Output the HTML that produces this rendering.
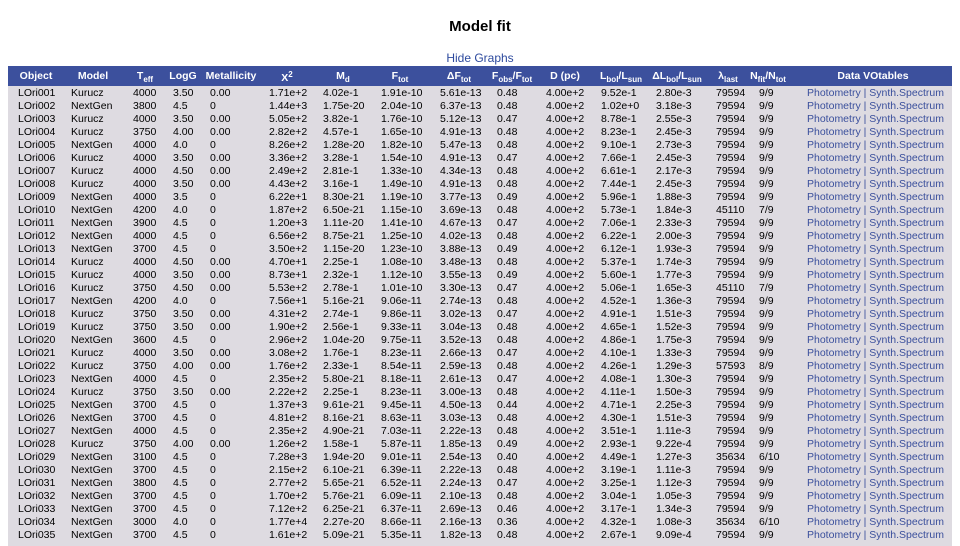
<!DOCTYPE html>
<html><head><meta charset="utf-8"><style>
body{margin:0;width:960px;height:544px;overflow:hidden;background:#fff;font-family:"Liberation Sans",Arial,sans-serif;color:#000}
h1{position:absolute;top:18px;left:0;width:960px;text-align:center;font-size:15px;margin:0;font-weight:bold}
.hg{position:absolute;top:51px;left:0;width:960px;text-align:center;font-size:12px;color:#2d4a9e}
.hd{position:absolute;top:66px;left:8px;width:944px;height:20px;background:#3c509d;color:#fff;font-weight:bold;font-size:10.5px}
.hd span{position:absolute;top:4px;transform:translateX(-50%);white-space:nowrap}
.hd sub{font-size:8px;vertical-align:-3px}
.hd sup{font-size:8px;vertical-align:4px}
.tb{position:absolute;top:86px;left:8px;width:944px;height:460px;background:#dedbe1;padding-top:1px;box-sizing:border-box}
.r{position:relative;height:13px;font-size:10.5px;line-height:13px;white-space:nowrap}
.r span{position:absolute;top:0}
.r span:nth-child(1){left:10px}.r span:nth-child(2){left:63px}.r span:nth-child(3){left:125px}.r span:nth-child(4){left:165px}.r span:nth-child(5){left:202px}.r span:nth-child(6){left:261px}.r span:nth-child(7){left:315px}.r span:nth-child(8){left:373px}.r span:nth-child(9){left:432px}.r span:nth-child(10){left:489px}.r span:nth-child(11){left:538px}.r span:nth-child(12){left:593px}.r span:nth-child(13){left:648px}.r span:nth-child(14){left:708px}.r span:nth-child(15){left:751px}.r span:nth-child(16){left:799px;color:#3a4f9c}
</style></head><body>
<h1>Model fit</h1>
<div class="hg">Hide Graphs</div>
<div class="hd">
<span style="left:28px">Object</span><span style="left:85px">Model</span><span style="left:137px">T<sub>eff</sub></span><span style="left:175px">LogG</span><span style="left:223px">Metallicity</span><span style="left:279px">X<sup>2</sup></span><span style="left:335px">M<sub>d</sub></span><span style="left:392px">F<sub>tot</sub></span><span style="left:451px">ΔF<sub>tot</sub></span><span style="left:504px">F<sub>obs</sub>/F<sub>tot</sub></span><span style="left:557px">D (pc)</span><span style="left:613px">L<sub>bol</sub>/L<sub>sun</sub></span><span style="left:669px">ΔL<sub>bol</sub>/L<sub>sun</sub></span><span style="left:720px">λ<sub>last</sub></span><span style="left:760px">N<sub>fit</sub>/N<sub>tot</sub></span><span style="left:865px">Data VOtables</span>
</div>
<div class="tb">
<div class="r"><span>LOri001</span><span>Kurucz</span><span>4000</span><span>3.50</span><span>0.00</span><span>1.71e+2</span><span>4.02e-1</span><span>1.91e-10</span><span>5.61e-13</span><span>0.48</span><span>4.00e+2</span><span>9.52e-1</span><span>2.80e-3</span><span>79594</span><span>9/9</span><span>Photometry | Synth.Spectrum</span></div>
<div class="r"><span>LOri002</span><span>NextGen</span><span>3800</span><span>4.5</span><span>0</span><span>1.44e+3</span><span>1.75e-20</span><span>2.04e-10</span><span>6.37e-13</span><span>0.48</span><span>4.00e+2</span><span>1.02e+0</span><span>3.18e-3</span><span>79594</span><span>9/9</span><span>Photometry | Synth.Spectrum</span></div>
<div class="r"><span>LOri003</span><span>Kurucz</span><span>4000</span><span>3.50</span><span>0.00</span><span>5.05e+2</span><span>3.82e-1</span><span>1.76e-10</span><span>5.12e-13</span><span>0.47</span><span>4.00e+2</span><span>8.78e-1</span><span>2.55e-3</span><span>79594</span><span>9/9</span><span>Photometry | Synth.Spectrum</span></div>
<div class="r"><span>LOri004</span><span>Kurucz</span><span>3750</span><span>4.00</span><span>0.00</span><span>2.82e+2</span><span>4.57e-1</span><span>1.65e-10</span><span>4.91e-13</span><span>0.48</span><span>4.00e+2</span><span>8.23e-1</span><span>2.45e-3</span><span>79594</span><span>9/9</span><span>Photometry | Synth.Spectrum</span></div>
<div class="r"><span>LOri005</span><span>NextGen</span><span>4000</span><span>4.0</span><span>0</span><span>8.26e+2</span><span>1.28e-20</span><span>1.82e-10</span><span>5.47e-13</span><span>0.48</span><span>4.00e+2</span><span>9.10e-1</span><span>2.73e-3</span><span>79594</span><span>9/9</span><span>Photometry | Synth.Spectrum</span></div>
<div class="r"><span>LOri006</span><span>Kurucz</span><span>4000</span><span>3.50</span><span>0.00</span><span>3.36e+2</span><span>3.28e-1</span><span>1.54e-10</span><span>4.91e-13</span><span>0.47</span><span>4.00e+2</span><span>7.66e-1</span><span>2.45e-3</span><span>79594</span><span>9/9</span><span>Photometry | Synth.Spectrum</span></div>
<div class="r"><span>LOri007</span><span>Kurucz</span><span>4000</span><span>4.50</span><span>0.00</span><span>2.49e+2</span><span>2.81e-1</span><span>1.33e-10</span><span>4.34e-13</span><span>0.48</span><span>4.00e+2</span><span>6.61e-1</span><span>2.17e-3</span><span>79594</span><span>9/9</span><span>Photometry | Synth.Spectrum</span></div>
<div class="r"><span>LOri008</span><span>Kurucz</span><span>4000</span><span>3.50</span><span>0.00</span><span>4.43e+2</span><span>3.16e-1</span><span>1.49e-10</span><span>4.91e-13</span><span>0.48</span><span>4.00e+2</span><span>7.44e-1</span><span>2.45e-3</span><span>79594</span><span>9/9</span><span>Photometry | Synth.Spectrum</span></div>
<div class="r"><span>LOri009</span><span>NextGen</span><span>4000</span><span>3.5</span><span>0</span><span>6.22e+1</span><span>8.30e-21</span><span>1.19e-10</span><span>3.77e-13</span><span>0.49</span><span>4.00e+2</span><span>5.96e-1</span><span>1.88e-3</span><span>79594</span><span>9/9</span><span>Photometry | Synth.Spectrum</span></div>
<div class="r"><span>LOri010</span><span>NextGen</span><span>4200</span><span>4.0</span><span>0</span><span>1.87e+2</span><span>6.50e-21</span><span>1.15e-10</span><span>3.69e-13</span><span>0.48</span><span>4.00e+2</span><span>5.73e-1</span><span>1.84e-3</span><span>45110</span><span>7/9</span><span>Photometry | Synth.Spectrum</span></div>
<div class="r"><span>LOri011</span><span>NextGen</span><span>3900</span><span>4.5</span><span>0</span><span>1.20e+3</span><span>1.11e-20</span><span>1.41e-10</span><span>4.67e-13</span><span>0.47</span><span>4.00e+2</span><span>7.06e-1</span><span>2.33e-3</span><span>79594</span><span>9/9</span><span>Photometry | Synth.Spectrum</span></div>
<div class="r"><span>LOri012</span><span>NextGen</span><span>4000</span><span>4.5</span><span>0</span><span>6.56e+2</span><span>8.75e-21</span><span>1.25e-10</span><span>4.02e-13</span><span>0.48</span><span>4.00e+2</span><span>6.22e-1</span><span>2.00e-3</span><span>79594</span><span>9/9</span><span>Photometry | Synth.Spectrum</span></div>
<div class="r"><span>LOri013</span><span>NextGen</span><span>3700</span><span>4.5</span><span>0</span><span>3.50e+2</span><span>1.15e-20</span><span>1.23e-10</span><span>3.88e-13</span><span>0.49</span><span>4.00e+2</span><span>6.12e-1</span><span>1.93e-3</span><span>79594</span><span>9/9</span><span>Photometry | Synth.Spectrum</span></div>
<div class="r"><span>LOri014</span><span>Kurucz</span><span>4000</span><span>4.50</span><span>0.00</span><span>4.70e+1</span><span>2.25e-1</span><span>1.08e-10</span><span>3.48e-13</span><span>0.48</span><span>4.00e+2</span><span>5.37e-1</span><span>1.74e-3</span><span>79594</span><span>9/9</span><span>Photometry | Synth.Spectrum</span></div>
<div class="r"><span>LOri015</span><span>Kurucz</span><span>4000</span><span>3.50</span><span>0.00</span><span>8.73e+1</span><span>2.32e-1</span><span>1.12e-10</span><span>3.55e-13</span><span>0.49</span><span>4.00e+2</span><span>5.60e-1</span><span>1.77e-3</span><span>79594</span><span>9/9</span><span>Photometry | Synth.Spectrum</span></div>
<div class="r"><span>LOri016</span><span>Kurucz</span><span>3750</span><span>4.50</span><span>0.00</span><span>5.53e+2</span><span>2.78e-1</span><span>1.01e-10</span><span>3.30e-13</span><span>0.47</span><span>4.00e+2</span><span>5.06e-1</span><span>1.65e-3</span><span>45110</span><span>7/9</span><span>Photometry | Synth.Spectrum</span></div>
<div class="r"><span>LOri017</span><span>NextGen</span><span>4200</span><span>4.0</span><span>0</span><span>7.56e+1</span><span>5.16e-21</span><span>9.06e-11</span><span>2.74e-13</span><span>0.48</span><span>4.00e+2</span><span>4.52e-1</span><span>1.36e-3</span><span>79594</span><span>9/9</span><span>Photometry | Synth.Spectrum</span></div>
<div class="r"><span>LOri018</span><span>Kurucz</span><span>3750</span><span>3.50</span><span>0.00</span><span>4.31e+2</span><span>2.74e-1</span><span>9.86e-11</span><span>3.02e-13</span><span>0.47</span><span>4.00e+2</span><span>4.91e-1</span><span>1.51e-3</span><span>79594</span><span>9/9</span><span>Photometry | Synth.Spectrum</span></div>
<div class="r"><span>LOri019</span><span>Kurucz</span><span>3750</span><span>3.50</span><span>0.00</span><span>1.90e+2</span><span>2.56e-1</span><span>9.33e-11</span><span>3.04e-13</span><span>0.48</span><span>4.00e+2</span><span>4.65e-1</span><span>1.52e-3</span><span>79594</span><span>9/9</span><span>Photometry | Synth.Spectrum</span></div>
<div class="r"><span>LOri020</span><span>NextGen</span><span>3600</span><span>4.5</span><span>0</span><span>2.96e+2</span><span>1.04e-20</span><span>9.75e-11</span><span>3.52e-13</span><span>0.48</span><span>4.00e+2</span><span>4.86e-1</span><span>1.75e-3</span><span>79594</span><span>9/9</span><span>Photometry | Synth.Spectrum</span></div>
<div class="r"><span>LOri021</span><span>Kurucz</span><span>4000</span><span>3.50</span><span>0.00</span><span>3.08e+2</span><span>1.76e-1</span><span>8.23e-11</span><span>2.66e-13</span><span>0.47</span><span>4.00e+2</span><span>4.10e-1</span><span>1.33e-3</span><span>79594</span><span>9/9</span><span>Photometry | Synth.Spectrum</span></div>
<div class="r"><span>LOri022</span><span>Kurucz</span><span>3750</span><span>4.00</span><span>0.00</span><span>1.76e+2</span><span>2.33e-1</span><span>8.54e-11</span><span>2.59e-13</span><span>0.48</span><span>4.00e+2</span><span>4.26e-1</span><span>1.29e-3</span><span>57593</span><span>8/9</span><span>Photometry | Synth.Spectrum</span></div>
<div class="r"><span>LOri023</span><span>NextGen</span><span>4000</span><span>4.5</span><span>0</span><span>2.35e+2</span><span>5.80e-21</span><span>8.18e-11</span><span>2.61e-13</span><span>0.47</span><span>4.00e+2</span><span>4.08e-1</span><span>1.30e-3</span><span>79594</span><span>9/9</span><span>Photometry | Synth.Spectrum</span></div>
<div class="r"><span>LOri024</span><span>Kurucz</span><span>3750</span><span>3.50</span><span>0.00</span><span>2.22e+2</span><span>2.25e-1</span><span>8.23e-11</span><span>3.00e-13</span><span>0.48</span><span>4.00e+2</span><span>4.11e-1</span><span>1.50e-3</span><span>79594</span><span>9/9</span><span>Photometry | Synth.Spectrum</span></div>
<div class="r"><span>LOri025</span><span>NextGen</span><span>3700</span><span>4.5</span><span>0</span><span>1.37e+3</span><span>9.61e-21</span><span>9.45e-11</span><span>4.50e-13</span><span>0.44</span><span>4.00e+2</span><span>4.71e-1</span><span>2.25e-3</span><span>79594</span><span>9/9</span><span>Photometry | Synth.Spectrum</span></div>
<div class="r"><span>LOri026</span><span>NextGen</span><span>3700</span><span>4.5</span><span>0</span><span>4.81e+2</span><span>8.16e-21</span><span>8.63e-11</span><span>3.03e-13</span><span>0.48</span><span>4.00e+2</span><span>4.30e-1</span><span>1.51e-3</span><span>79594</span><span>9/9</span><span>Photometry | Synth.Spectrum</span></div>
<div class="r"><span>LOri027</span><span>NextGen</span><span>4000</span><span>4.5</span><span>0</span><span>2.35e+2</span><span>4.90e-21</span><span>7.03e-11</span><span>2.22e-13</span><span>0.48</span><span>4.00e+2</span><span>3.51e-1</span><span>1.11e-3</span><span>79594</span><span>9/9</span><span>Photometry | Synth.Spectrum</span></div>
<div class="r"><span>LOri028</span><span>Kurucz</span><span>3750</span><span>4.00</span><span>0.00</span><span>1.26e+2</span><span>1.58e-1</span><span>5.87e-11</span><span>1.85e-13</span><span>0.49</span><span>4.00e+2</span><span>2.93e-1</span><span>9.22e-4</span><span>79594</span><span>9/9</span><span>Photometry | Synth.Spectrum</span></div>
<div class="r"><span>LOri029</span><span>NextGen</span><span>3100</span><span>4.5</span><span>0</span><span>7.28e+3</span><span>1.94e-20</span><span>9.01e-11</span><span>2.54e-13</span><span>0.40</span><span>4.00e+2</span><span>4.49e-1</span><span>1.27e-3</span><span>35634</span><span>6/10</span><span>Photometry | Synth.Spectrum</span></div>
<div class="r"><span>LOri030</span><span>NextGen</span><span>3700</span><span>4.5</span><span>0</span><span>2.15e+2</span><span>6.10e-21</span><span>6.39e-11</span><span>2.22e-13</span><span>0.48</span><span>4.00e+2</span><span>3.19e-1</span><span>1.11e-3</span><span>79594</span><span>9/9</span><span>Photometry | Synth.Spectrum</span></div>
<div class="r"><span>LOri031</span><span>NextGen</span><span>3800</span><span>4.5</span><span>0</span><span>2.77e+2</span><span>5.65e-21</span><span>6.52e-11</span><span>2.24e-13</span><span>0.47</span><span>4.00e+2</span><span>3.25e-1</span><span>1.12e-3</span><span>79594</span><span>9/9</span><span>Photometry | Synth.Spectrum</span></div>
<div class="r"><span>LOri032</span><span>NextGen</span><span>3700</span><span>4.5</span><span>0</span><span>1.70e+2</span><span>5.76e-21</span><span>6.09e-11</span><span>2.10e-13</span><span>0.48</span><span>4.00e+2</span><span>3.04e-1</span><span>1.05e-3</span><span>79594</span><span>9/9</span><span>Photometry | Synth.Spectrum</span></div>
<div class="r"><span>LOri033</span><span>NextGen</span><span>3700</span><span>4.5</span><span>0</span><span>7.12e+2</span><span>6.25e-21</span><span>6.37e-11</span><span>2.69e-13</span><span>0.46</span><span>4.00e+2</span><span>3.17e-1</span><span>1.34e-3</span><span>79594</span><span>9/9</span><span>Photometry | Synth.Spectrum</span></div>
<div class="r"><span>LOri034</span><span>NextGen</span><span>3000</span><span>4.0</span><span>0</span><span>1.77e+4</span><span>2.27e-20</span><span>8.66e-11</span><span>2.16e-13</span><span>0.36</span><span>4.00e+2</span><span>4.32e-1</span><span>1.08e-3</span><span>35634</span><span>6/10</span><span>Photometry | Synth.Spectrum</span></div>
<div class="r"><span>LOri035</span><span>NextGen</span><span>3700</span><span>4.5</span><span>0</span><span>1.61e+2</span><span>5.09e-21</span><span>5.35e-11</span><span>1.82e-13</span><span>0.48</span><span>4.00e+2</span><span>2.67e-1</span><span>9.09e-4</span><span>79594</span><span>9/9</span><span>Photometry | Synth.Spectrum</span></div>
</div>
</body></html>
